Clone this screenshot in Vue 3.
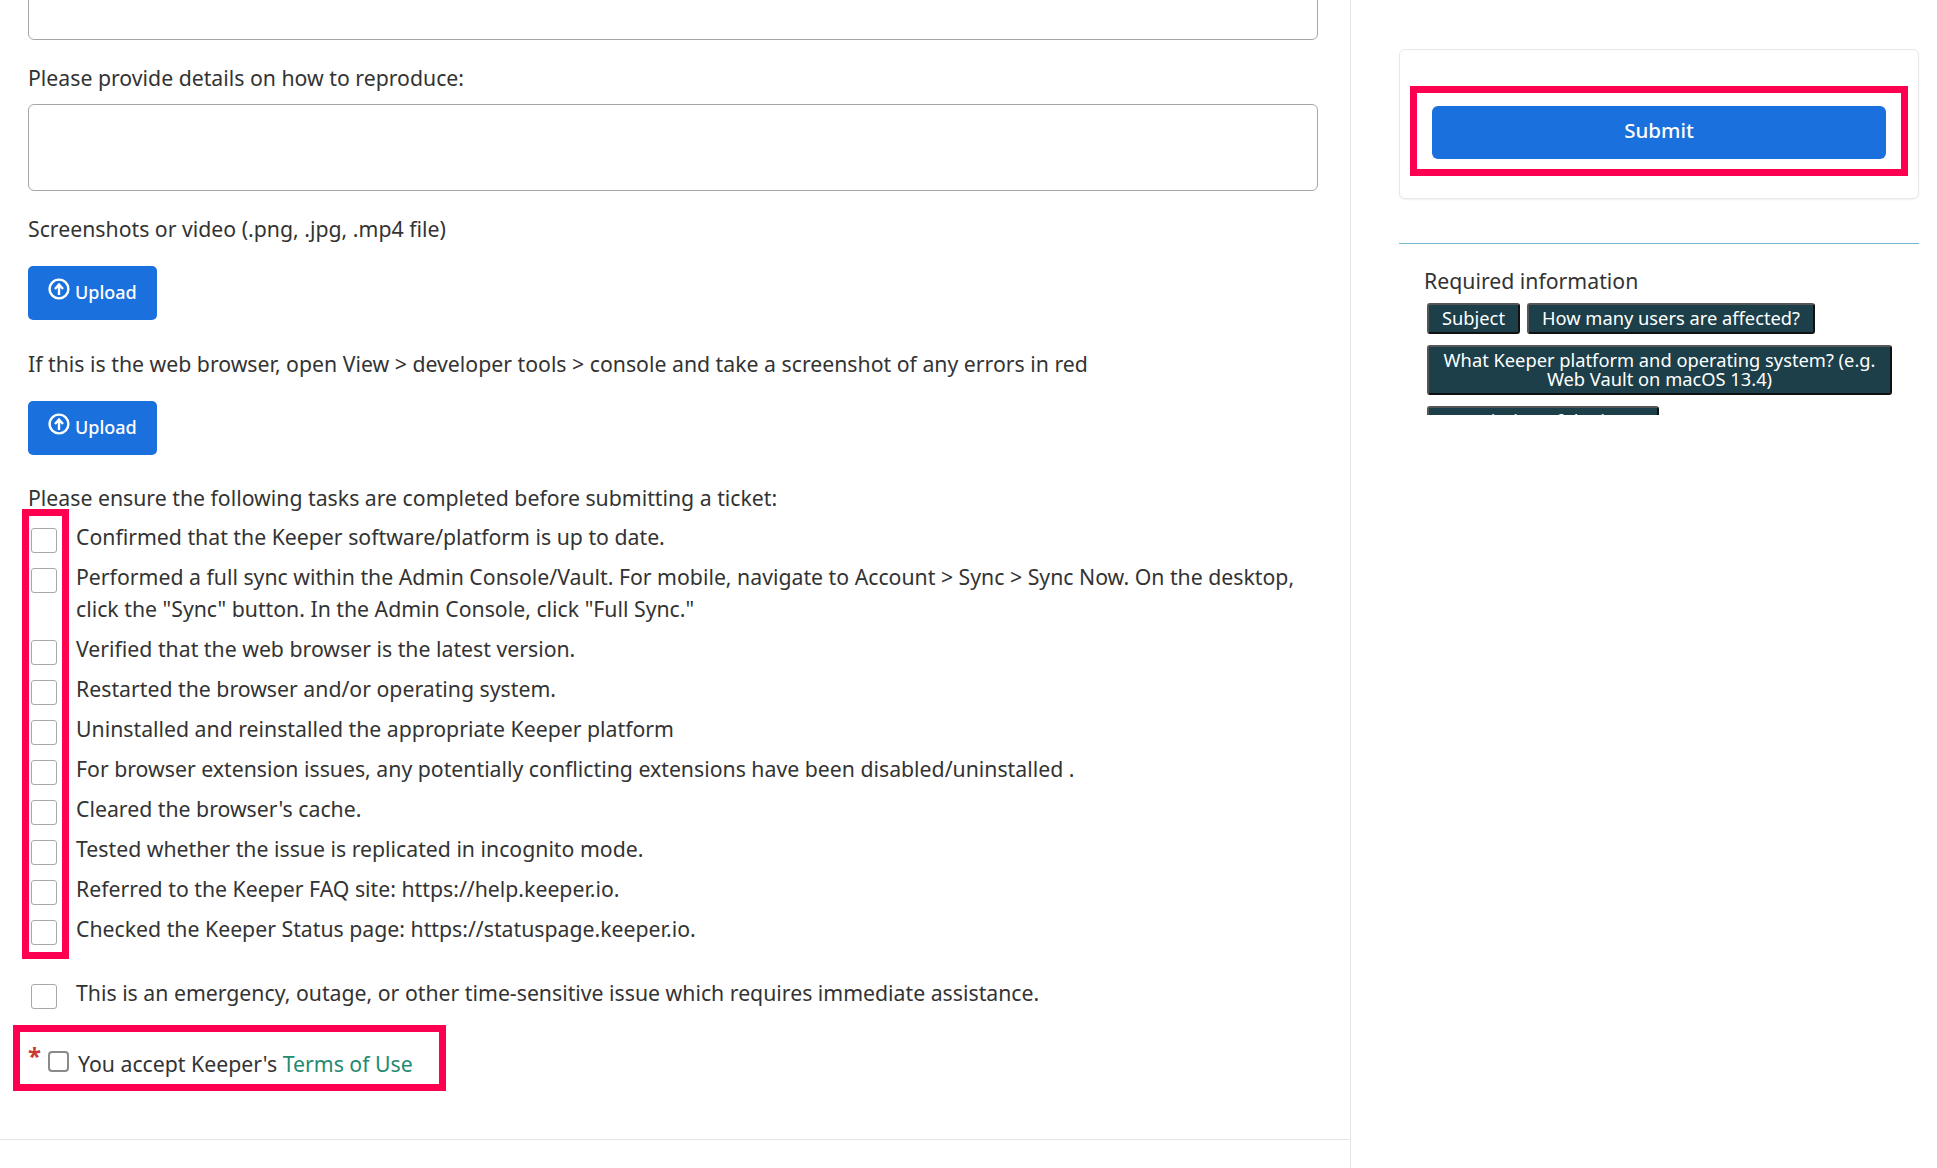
<script setup>
const tasks = [
  'Confirmed that the Keeper software/platform is up to date.',
  'Performed a full sync within the Admin Console/Vault. For mobile, navigate to Account > Sync > Sync Now. On the desktop, click the "Sync" button. In the Admin Console, click "Full Sync."',
  'Verified that the web browser is the latest version.',
  'Restarted the browser and/or operating system.',
  'Uninstalled and reinstalled the appropriate Keeper platform',
  'For browser extension issues, any potentially conflicting extensions have been disabled/uninstalled .',
  "Cleared the browser's cache.",
  'Tested whether the issue is replicated in incognito mode.',
  'Referred to the Keeper FAQ site: https://help.keeper.io.',
  'Checked the Keeper Status page: https://statuspage.keeper.io.'
]

const uploads = [
  'Screenshots or video (.png, .jpg, .mp4 file)',
  'If this is the web browser, open View > developer tools > console and take a screenshot of any errors in red'
]

const chips = [
  'Subject',
  'How many users are affected?',
  'What Keeper platform and operating system? (e.g. Web Vault on macOS 13.4)',
  'Description of the issue'
]
</script>

<template>
  <div class="page">
    <main class="form">
      <textarea class="field field-top"></textarea>

      <label class="label">Please provide details on how to reproduce:</label>
      <textarea class="field"></textarea>

      <template v-for="text in uploads" :key="text">
        <div class="label">{{ text }}</div>
        <button class="upload" type="button">
          <svg class="upload-icon" viewBox="0 0 22 22" fill="none" stroke="#fff" stroke-width="2.4">
            <circle cx="11" cy="11" r="9.4" />
            <path d="M11 17V7M7 11l4-4.5 4 4.5" />
          </svg>
          <span>Upload</span>
        </button>
      </template>

      <div class="label label-tasks">Please ensure the following tasks are completed before submitting a ticket:</div>

      <div class="tasks">
        <div class="frame frame-tasks"></div>
        <label v-for="task in tasks" :key="task" class="task">
          <input type="checkbox" class="check" />
          <span>{{ task }}</span>
        </label>
      </div>

      <label class="task emergency">
        <input type="checkbox" class="check" />
        <span>This is an emergency, outage, or other time-sensitive issue which requires immediate assistance.</span>
      </label>

      <div class="terms">
        <div class="frame frame-terms"></div>
        <span class="star">*</span>
        <input type="checkbox" class="terms-check" />
        <span>You accept Keeper's <a class="link" href="#">Terms of Use</a></span>
      </div>

      <div class="rule"></div>
    </main>

    <aside class="side">
      <div class="card">
        <div class="frame frame-submit"></div>
        <button class="submit" type="button">Submit</button>
      </div>
      <div class="side-line"></div>
      <div class="required">
        <div class="required-title">Required information</div>
        <div class="chips">
          <span v-for="chip in chips" :key="chip" class="chip">{{ chip }}</span>
        </div>
      </div>
    </aside>
  </div>
</template>

<style scoped>
.page {
  display: flex;
  height: 1168px;
  overflow: hidden;
  background: #fff;
  color: #333;
  font-family: "Noto Sans", "Liberation Sans", sans-serif;
  font-size: 21.25px;
  line-height: 32px;
}

.form {
  width: 1351px;
  flex-shrink: 0;
  box-sizing: border-box;
  padding-left: 28px;
  border-right: 1px solid #e6e6e6;
}

.field {
  display: block;
  box-sizing: border-box;
  width: 1290px;
  height: 87px;
  margin: 0;
  border: 1px solid #a6a6a6;
  border-radius: 6px;
  background: #fff;
  resize: none;
}

.field-top {
  margin-top: -47px;
}

.label {
  display: block;
  margin-top: 23px;
  margin-bottom: 10px;
}

.field + .label {
  margin-top: 22px;
}

.label-tasks {
  margin-top: -1px;
}

.upload {
  display: flex;
  align-items: flex-start;
  gap: 5px;
  box-sizing: border-box;
  width: 129px;
  height: 54px;
  margin: 21px 0 28px;
  padding: 12px 0 0 20px;
  border: 0;
  border-radius: 5px;
  background: #1a70dc;
  color: #fff;
  font: inherit;
  font-size: 18px;
  font-weight: 500;
  line-height: 28px;
}

.upload-icon {
  width: 22px;
  height: 22px;
}

.upload + .label:not(.label-tasks) {
  margin-top: 0;
}

.tasks {
  position: relative;
  display: flex;
  flex-direction: column;
  gap: 8px;
  margin-top: -3px;
}

.task {
  display: flex;
  gap: 19px;
  padding-left: 3px;
  padding-right: 32px;
}

.check {
  appearance: none;
  flex-shrink: 0;
  box-sizing: border-box;
  width: 26px;
  height: 25px;
  margin: 7px 0 0;
  border: 1px solid #a8a8a8;
  border-radius: 3px;
  background: #fff;
}

.emergency {
  margin-top: 32px;
}

.terms {
  position: relative;
  display: flex;
  align-items: flex-start;
  height: 32px;
  margin-top: 39px;
}

.star {
  width: 20px;
  margin-top: -5px;
  color: #cc3b33;
  font-size: 24px;
  line-height: 26px;
  font-weight: 700;
}

.terms-check {
  appearance: none;
  flex-shrink: 0;
  box-sizing: border-box;
  width: 21px;
  height: 21px;
  margin: 3px 9px 0 0;
  border: 2px solid #8a8a8a;
  border-radius: 4px;
  background: #fff;
}

.link {
  color: #1f8a70;
  text-decoration: none;
}

.rule {
  height: 1px;
  margin: 59px 0 0 -28px;
  background: #e6e6e6;
}

.frame {
  position: absolute;
  box-sizing: border-box;
  border: 7px solid #ff0050;
  pointer-events: none;
}

.frame-tasks {
  left: -6px;
  top: -12px;
  width: 47px;
  height: 450px;
}

.frame-terms {
  left: -15px;
  top: -23px;
  width: 433px;
  height: 66px;
}

.frame-submit {
  left: 10px;
  top: 36px;
  width: 498px;
  height: 90px;
}

.side {
  flex: 1;
  padding-left: 48px;
  padding-right: 18px;
}

.card {
  position: relative;
  box-sizing: border-box;
  height: 150px;
  margin-top: 49px;
  padding: 56px 32px 0;
  border: 1px solid #e8e8e8;
  border-radius: 6px;
  box-shadow: 0 1px 2px rgba(0, 0, 0, 0.06);
}

.submit {
  display: block;
  width: 100%;
  height: 53px;
  padding: 0 0 6px;
  border: 0;
  border-radius: 6px;
  background: #1a70dc;
  color: #fff;
  font: inherit;
  font-size: 20.5px;
  font-weight: 500;
}

.side-line {
  height: 1px;
  margin-top: 44px;
  background: #6fb6cf;
}

.required {
  height: 171px;
  overflow: hidden;
  padding-left: 25px;
}

.required-title {
  margin-top: 21px;
  line-height: 32px;
}

.chips {
  display: flex;
  flex-wrap: wrap;
  gap: 11px 7px;
  width: 465px;
  margin: 6px 0 0 3px;
}

.chip {
  box-sizing: border-box;
  padding: 3px 13px 5px;
  border: 2px solid;
  border-color: #555 #111 #111 #555;
  border-radius: 3px;
  background: #1c3f4a;
  color: #fff;
  font-size: 18.3px;
  line-height: 19px;
  text-align: center;
}
</style>
